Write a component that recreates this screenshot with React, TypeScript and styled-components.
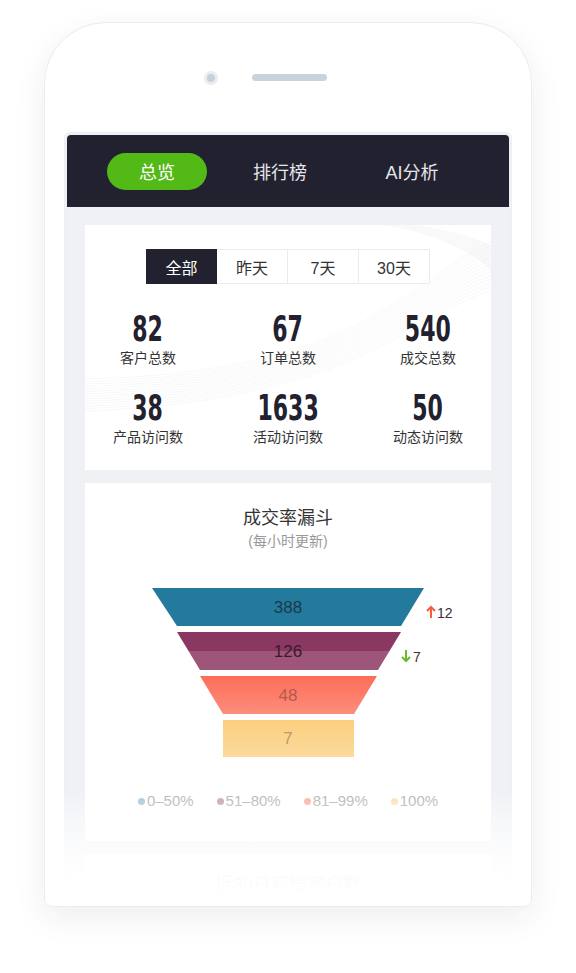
import styled, { createGlobalStyle } from 'styled-components';

const Global = createGlobalStyle`
  html, body { margin: 0; padding: 0; background: #fff; }
  body { font-family: "Liberation Sans", "Noto Sans CJK SC", sans-serif; }
`;

const Page = styled.div`
  width: 576px;
  height: 973px;
  padding-top: 22px;
  box-sizing: border-box;
  display: flex;
  justify-content: center;
  overflow: hidden;
`;

const Phone = styled.div`
  position: relative;
  width: 488px;
  height: 885px;
  box-sizing: border-box;
  border: 1px solid #ececee;
  border-radius: 62px 62px 8px 8px;
  background: #fff;
  box-shadow: 0 10px 32px rgba(30, 40, 60, 0.08);
  overflow: hidden;
  display: flex;
  flex-direction: column;
  align-items: center;
`;

const TopBar = styled.div`
  align-self: stretch;
  height: 109px;
  flex: none;
  display: flex;
  align-items: center;
  gap: 34px;
  padding-left: 159px;
`;

const Camera = styled.div`
  width: 14px;
  height: 14px;
  border-radius: 50%;
  background: #e9edf1;
  display: flex;
  align-items: center;
  justify-content: center;
  &::after {
    content: '';
    width: 8px;
    height: 8px;
    border-radius: 50%;
    background: #c7d1da;
  }
`;

const Speaker = styled.div`
  width: 75px;
  height: 7px;
  border-radius: 4px;
  background: #c9d3dc;
`;

const Screen = styled.div`
  width: 448px;
  flex: 1;
  box-sizing: border-box;
  border: 3px solid #eef0f4;
  border-bottom: none;
  border-radius: 6px 6px 0 0;
  display: flex;
  flex-direction: column;
`;

const Header = styled.div`
  height: 72px;
  flex: none;
  background: #22212f;
  border-radius: 4px 4px 0 0;
  display: flex;
  align-items: center;
  gap: 23px;
  padding-left: 40px;
`;

const Tab = styled.div<{ $active?: boolean; $w: number }>`
  width: ${({ $w }) => $w}px;
  height: 37px;
  border-radius: 19px;
  display: flex;
  align-items: center;
  justify-content: center;
  font-size: 18px;
  color: ${({ $active }) => ($active ? '#fff' : '#e6e6ea')};
  background: ${({ $active }) => ($active ? '#52b916' : 'transparent')};
`;

const Content = styled.div`
  flex: 1;
  background: #eff1f5;
  padding: 18px;
  display: flex;
  flex-direction: column;
  gap: 13px;
`;

const Card = styled.div`
  position: relative;
  background: #fff;
  overflow: hidden;
`;

const StatsCard = styled(Card)`
  padding: 24px 0 23px;
`;

const Swoosh = styled.svg`
  position: absolute;
  inset: 0;
  pointer-events: none;
`;

const Segments = styled.div`
  position: relative;
  display: flex;
  justify-content: center;
`;

const Segment = styled.div<{ $active?: boolean }>`
  width: 71px;
  height: 35px;
  box-sizing: border-box;
  display: flex;
  align-items: center;
  justify-content: center;
  font-size: 16px;
  border: 1px solid ${({ $active }) => ($active ? '#22212f' : '#ebebeb')};
  background: ${({ $active }) => ($active ? '#22212f' : '#fff')};
  color: ${({ $active }) => ($active ? '#fff' : '#333')};
  & + & {
    border-left: none;
  }
`;

const StatsGrid = styled.div`
  position: relative;
  margin-top: 27px;
  display: grid;
  grid-template-columns: repeat(3, 140px);
  justify-content: center;
  row-gap: 22px;
`;

const Stat = styled.div`
  display: flex;
  flex-direction: column;
  align-items: center;
`;

const Num = styled.div`
  font-family: "DejaVu Sans Condensed", "DejaVu Sans", sans-serif;
  font-stretch: condensed;
  font-weight: 700;
  font-size: 36px;
  line-height: 36px;
  color: #22212f;
  transform: scaleX(0.68);
`;

const Label = styled.div`
  margin-top: 1px;
  font-size: 14px;
  line-height: 20px;
  color: #333;
`;

const FunnelCard = styled(Card)`
  padding: 23px 0 30px;
  display: flex;
  flex-direction: column;
  align-items: center;
`;

const Title = styled.div`
  font-size: 18px;
  line-height: 24px;
  color: #333;
`;

const Sub = styled.div`
  margin-top: 1px;
  font-size: 14px;
  line-height: 20px;
  color: #999;
`;

const Chart = styled.svg`
  margin-top: 33px;
  display: block;
`;

const Legend = styled.div`
  margin-top: 31px;
  display: flex;
  justify-content: center;
  gap: 23px;
  font-size: 15px;
  line-height: 20px;
  color: #b5b5b5;
`;

const LegendItem = styled.div<{ $c: string }>`
  display: flex;
  align-items: center;
  gap: 2px;
  &::before {
    content: '';
    width: 7px;
    height: 7px;
    border-radius: 50%;
    background: ${({ $c }) => $c};
  }
`;

const NextCard = styled(Card)`
  flex: 1;
  padding-top: 19px;
  text-align: center;
  font-size: 18px;
  line-height: 24px;
  color: #333;
`;

const Fade = styled.div`
  position: absolute;
  left: 0;
  right: 0;
  bottom: 0;
  height: 115px;
  pointer-events: none;
  background: linear-gradient(
    rgba(255, 255, 255, 0) 0%,
    rgba(255, 255, 255, 0.55) 30%,
    rgba(255, 255, 255, 0.96) 68%,
    #fff 90%
  );
`;

const stats = [
  { n: '82', l: '客户总数' },
  { n: '67', l: '订单总数' },
  { n: '540', l: '成交总数' },
  { n: '38', l: '产品访问数' },
  { n: '1633', l: '活动访问数' },
  { n: '50', l: '动态访问数' },
];

const legend = [
  { c: '#a6c8dc', t: '0–50%' },
  { c: '#c9a0b8', t: '51–80%' },
  { c: '#fcb1a6', t: '81–99%' },
  { c: '#fde0b2', t: '100%' },
];

const Funnel = () => (
  <Chart width={408} height={176} viewBox="0 0 408 176">
    <defs>
      <linearGradient id="g2" x1="0" y1="0" x2="0" y2="1">
        <stop offset="0" stopColor="#8a3862" />
        <stop offset="0.5" stopColor="#8a3862" />
        <stop offset="0.5" stopColor="#9d5679" />
        <stop offset="1" stopColor="#9d5679" />
      </linearGradient>
      <linearGradient id="g3" x1="0" y1="0" x2="0" y2="1">
        <stop offset="0" stopColor="#fd6e58" />
        <stop offset="1" stopColor="#fc8d7d" />
      </linearGradient>
      <linearGradient id="g4" x1="0" y1="0" x2="0" y2="1">
        <stop offset="0" stopColor="#fbcf7e" />
        <stop offset="1" stopColor="#fbda9d" />
      </linearGradient>
    </defs>
    <polygon points="68,4 340,4 317,42 93,42" fill="#247a9c" />
    <polygon points="93,48 317,48 294,86 116,86" fill="url(#g2)" />
    <polygon points="116,92 293,92 270,130 139,130" fill="url(#g3)" />
    <rect x="139" y="136" width="131" height="37" fill="url(#g4)" />
    <g fontSize="17" textAnchor="middle" fontFamily="Liberation Sans, sans-serif">
      <text x="204" y="29" fill="#173a4d">388</text>
      <text x="204" y="73" fill="#3a1a2c">126</text>
      <text x="204" y="117" fill="#b65a4c">48</text>
      <text x="204" y="160" fill="#c4966c">7</text>
    </g>
    <path d="M347 34 V23 M343 27 L347 23 L351 27" stroke="#fc5a3e" strokeWidth="2" fill="none" />
    <text x="353" y="34" fontSize="14" fill="#333" fontFamily="Liberation Sans, sans-serif">12</text>
    <path d="M322 66 V77 M318 73 L322 77 L326 73" stroke="#6bb82a" strokeWidth="2" fill="none" />
    <text x="329" y="78" fontSize="14" fill="#333" fontFamily="Liberation Sans, sans-serif">7</text>
  </Chart>
);

export default function App() {
  return (
    <Page>
      <Global />
      <Phone>
        <TopBar>
          <Camera />
          <Speaker />
        </TopBar>
        <Screen>
          <Header>
            <Tab $active $w={100}>总览</Tab>
            <Tab $w={100}>排行榜</Tab>
            <Tab $w={118}>AI分析</Tab>
          </Header>
          <Content>
            <StatsCard>
              <Swoosh viewBox="0 0 408 246" preserveAspectRatio="none">
                {Array.from({ length: 14 }).map((_, i) => (
                  <path
                    key={i}
                    d={`M430 ${8 + i * 4} C 330 ${40 + i * 3}, 300 ${150 + i * 2}, -10 ${155 + i * 2.5}`}
                    stroke="rgba(0,0,0,0.035)"
                    strokeWidth="1"
                    fill="none"
                  />
                ))}
                <path d="M300 0 C 360 10, 390 30, 408 45 L 408 20 C 380 8, 350 2, 330 0 Z" fill="rgba(0,0,0,0.025)" />
              </Swoosh>
              <Segments>
                <Segment $active>全部</Segment>
                <Segment>昨天</Segment>
                <Segment>7天</Segment>
                <Segment>30天</Segment>
              </Segments>
              <StatsGrid>
                {stats.map((s) => (
                  <Stat key={s.l}>
                    <Num>{s.n}</Num>
                    <Label>{s.l}</Label>
                  </Stat>
                ))}
              </StatsGrid>
            </StatsCard>
            <FunnelCard>
              <Title>成交率漏斗</Title>
              <Sub>(每小时更新)</Sub>
              <Funnel />
              <Legend>
                {legend.map((l) => (
                  <LegendItem key={l.t} $c={l.c}>{l.t}</LegendItem>
                ))}
              </Legend>
            </FunnelCard>
            <NextCard>近30日新增客户数</NextCard>
          </Content>
        </Screen>
        <Fade />
      </Phone>
    </Page>
  );
}
